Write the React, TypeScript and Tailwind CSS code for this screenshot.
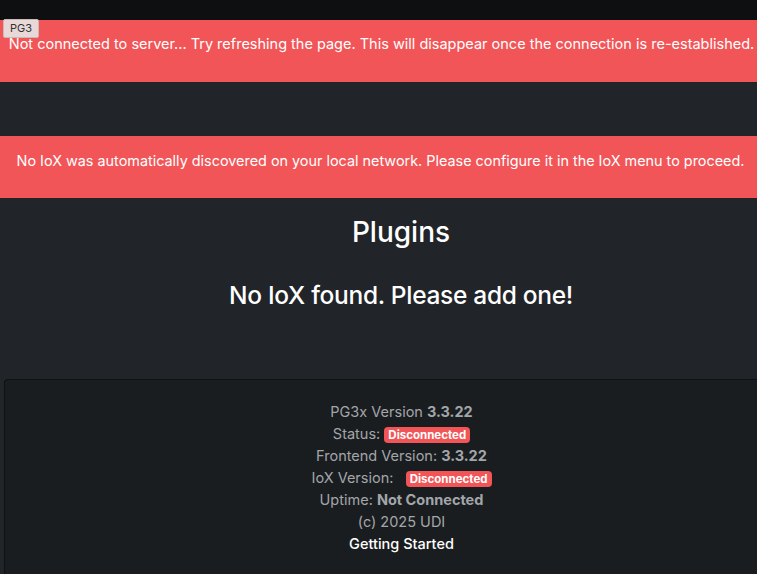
import React from 'react';

function Badge({ children }: { children: React.ReactNode }) {
  return (
    <span className="inline-block rounded-[4px] bg-[#f25557] px-[4px] py-[1px] align-middle text-[11.5px] font-bold leading-[14px] text-white">
      {children}
    </span>
  );
}

export default function App() {
  return (
    <div
      className="relative h-[574px] w-[757px] overflow-hidden bg-[#212428] text-white"
      style={{ fontFamily: 'Inter, "Noto Sans", "Liberation Sans", sans-serif' }}
    >
      {/* top bar */}
      <div className="h-[20px] bg-[#0e0f11]" />

      {/* connection banner */}
      <div className="relative flex h-[62px] items-start justify-center bg-[#f25557] pl-[6px] pt-[14px]">
        <p className="whitespace-nowrap text-[14.5px] leading-[20px]">
          Not connected to server... Try refreshing the page. This will disappear once the connection is re-established.
        </p>
        <div className="absolute left-[3px] top-[-1px] rounded-[2px] border border-[#c9b9b9] bg-[#e8d8d8] px-[6px] text-[11px] leading-[17px] text-[#333]">
          PG3
        </div>
      </div>

      <div className="h-[54px]" />

      {/* IoX banner */}
      <div className="flex h-[62px] items-start justify-center bg-[#f25557] pl-[4px] pt-[15px]">
        <p className="whitespace-nowrap text-[14.4px] leading-[20px]">
          No IoX was automatically discovered on your local network. Please configure it in the IoX menu to proceed.
        </p>
      </div>

      {/* main */}
      <div className="ml-[4px] w-[794px]">
        <div className="flex flex-col items-center">
          <h1 className="mt-[17px] text-[28px] font-medium leading-[34px]">Plugins</h1>
          <h2 className="mt-[30px] text-[24.5px] font-medium leading-[32px] tracking-[-0.3px]">No IoX found. Please add one!</h2>
        </div>

        <footer className="mt-[68px] h-[200px] rounded-tl-[4px] border-l border-t border-[#0f1113] bg-[#1a1d20] pt-[21px] text-center text-[14.5px] leading-[22px] text-[#a3a6a9]">
          <p>
            PG3x Version <b className="font-bold">3.3.22</b>
          </p>
          <p>
            Status: <Badge>Disconnected</Badge>
          </p>
          <p>
            Frontend Version: <b className="font-bold">3.3.22</b>
          </p>
          <p>
            IoX Version: &nbsp;&nbsp;<Badge>Disconnected</Badge>
          </p>
          <p>
            Uptime: <b className="font-bold">Not Connected</b>
          </p>
          <p>(c) 2025 UDI</p>
          <p className="font-medium text-white">Getting Started</p>
        </footer>
      </div>
    </div>
  );
}
